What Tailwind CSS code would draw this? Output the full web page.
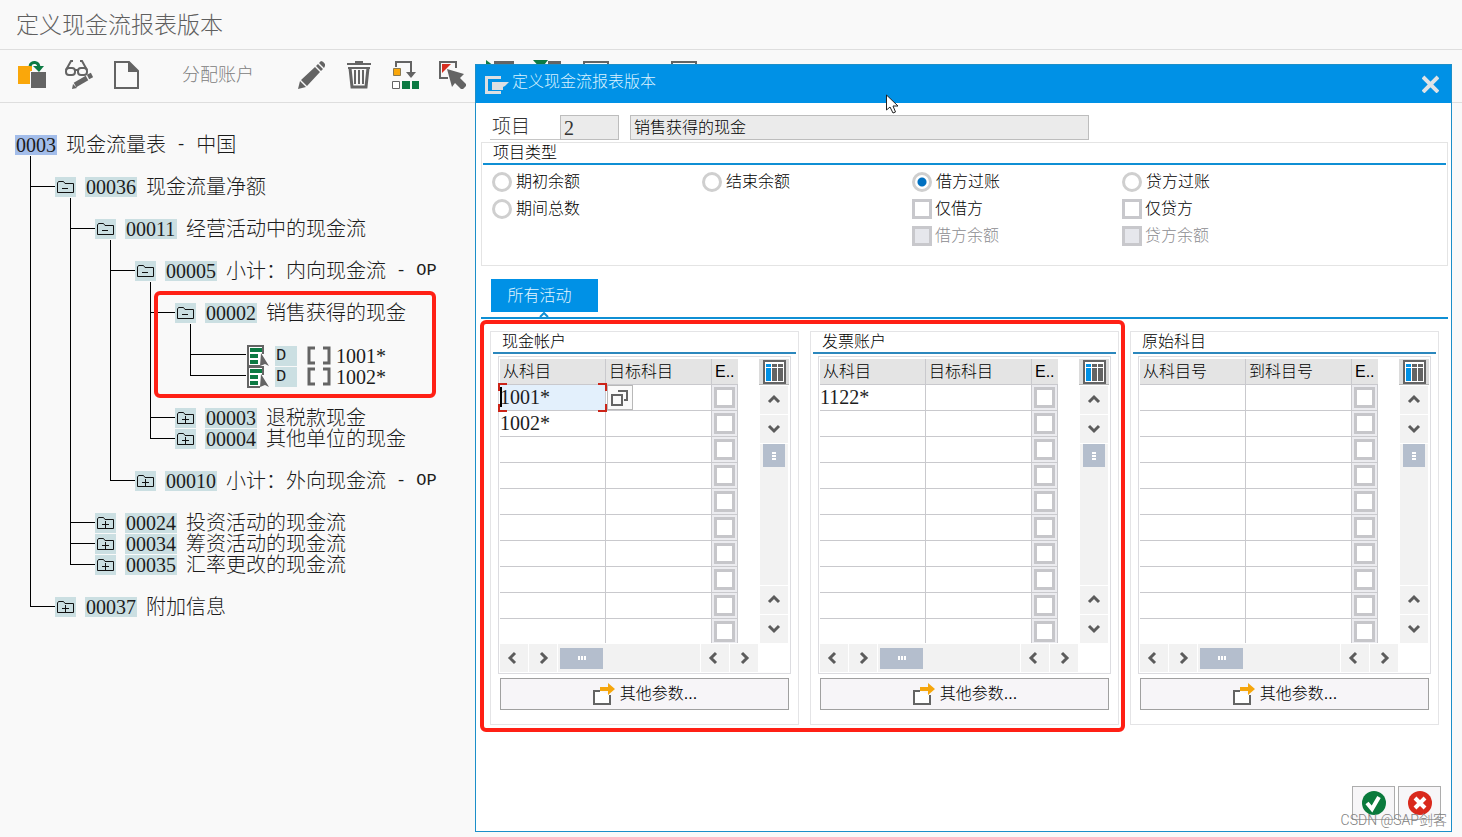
<!DOCTYPE html>
<html lang="zh-CN">
<head>
    <meta charset="utf-8"/>
    <meta content="width=device-width, initial-scale=1.0" name="viewport"/>
    <title>定义现金流报表版本</title>
    <script src="https://cdn.jsdelivr.net/npm/@tailwindcss/browser@4"></script>
</head>
<body class="relative min-h-screen overflow-x-hidden bg-[#f9f9f9] font-['Liberation_Sans','Noto_Sans_CJK_SC',sans-serif] font-light text-black">
    <header class="flex h-[50px] items-center border-b border-[#dedede] pl-4">
        <h1 class="text-[23px] leading-6 text-[#5f5f5f]">定义现金流报表版本</h1>
    </header>
    <nav class="flex h-[53px] items-center gap-[18px] overflow-hidden border-b border-[#dedede] pb-[3px] pl-[17px] text-[#646464]">
        <button aria-label="复制" class="shrink-0">
            <svg width="29" height="29" viewBox="0 0 29 29"><path fill="#faa70a" d="M1 6h14v18H1z"/><path fill="#646464" stroke="#f9f9f9" stroke-width="1" d="M13.500 11.500h16v17h-16z"/><path fill="none" stroke="#0c7a43" stroke-width="3" d="M13 6c1-5 9-5 9 2"/><path fill="#0c7a43" d="M16 6h11l-5 6z"/></svg>
        </button>
        <button aria-label="显示/更改" class="shrink-0">
            <svg width="29" height="29" viewBox="0 0 29 29" fill="none" stroke="#646464" stroke-width="2"><rect x="2" y="8" width="9" height="7" rx="3"/><rect x="14" y="8" width="9" height="7" rx="3"/><path d="M11 10h3M2 10L7 1h2M23 10L18 1h-2"/><path stroke-width="5" d="M11 25l12-7"/><path stroke-width="5" d="M24 17l4-2"/><path fill="#646464" stroke="none" d="M8 29l1-5 4 4z"/></svg>
        </button>
        <button aria-label="创建" class="shrink-0">
            <svg width="29" height="29" viewBox="0 0 29 29"><path fill="none" stroke="#646464" stroke-width="2" d="M4 2h14l9 9v17H4z"/><path fill="#646464" d="M17 1l11 11H17z"/></svg>
        </button>
        <button class="shrink-0 px-6 text-[18px] leading-6 text-[#808080]">分配账户</button>
        <button aria-label="更改" class="shrink-0">
            <svg width="29" height="29" viewBox="0 0 29 29" fill="#646464"><path d="M2 29l2-8 6 6zM5 20L19 7l5 5L11 26zM20 6l2-2 5 5-2 2zM23 3l2-2q2 0 4 3v2l-1 2z"/></svg>
        </button>
        <button aria-label="删除" class="shrink-0">
            <svg width="29" height="29" viewBox="0 0 29 29"><path fill="#646464" d="M4 3h8V1h8v2h8v2H4zM5 7h22v2H5z"/><path fill="none" stroke="#646464" stroke-width="3" d="M7 8l2 19h14l2-19"/><path stroke="#646464" stroke-width="2" d="M12 10v14M16 10v14M20 10v14"/></svg>
        </button>
        <button aria-label="层次" class="shrink-0">
            <svg width="29" height="29" viewBox="0 0 29 29"><path fill="none" stroke="#646464" stroke-width="2" d="M6 7V2h15v12"/><path fill="#646464" d="M16 12h10l-5 6z"/><path fill="#faa70a" stroke="#8a7a50" d="M3.500 8.500h7v7h-7z"/><path fill="#fff" stroke="#646464" d="M2.500 21.500h7v7h-7z"/><path fill="#0c7a43" d="M12 21h8v8h-8zM22 21h8v8h-8z"/></svg>
        </button>
        <button aria-label="选择" class="shrink-0">
            <svg width="29" height="29" viewBox="0 0 29 29"><path fill="none" stroke="#646464" stroke-width="2" d="M19 8V2H3v16h8"/><path fill="#d82e20" d="M5 4h9l-9 9z"/><path fill="#646464" d="M10 9l17 5-4 4 7 7-5 5-7-7-3 4z"/></svg>
        </button>
        <button aria-label="插入" class="shrink-0">
            <svg width="31" height="29" viewBox="0 0 31 29"><path fill="#0c7a43" d="M2 0l8 6-8 6z"/><path fill="#646464" d="M10 1h20v4H10z"/></svg>
        </button>
        <button aria-label="移动" class="shrink-0">
            <svg width="29" height="29" viewBox="0 0 29 29"><path fill="#0c7a43" d="M0 0h15l-7 9z"/><path fill="#646464" d="M15 1h13v4H15z"/></svg>
        </button>
        <button aria-label="展开" class="shrink-0">
            <svg width="29" height="29" viewBox="0 0 29 29"><path fill="none" stroke="#646464" stroke-width="2" d="M4 2h24v24H4z"/></svg>
        </button>
        <button aria-label="折叠" class="ml-[41px] shrink-0">
            <svg width="29" height="29" viewBox="0 0 29 29"><path fill="none" stroke="#646464" stroke-width="2" d="M4 2h24v24H4z"/></svg>
        </button>
    </nav>

    <main class="px-[15px] pt-8 pb-[200px] font-['Liberation_Serif','Noto_Sans_CJK_SC',serif] text-[20px] leading-5 text-[#1c1c1c]">
        <div class="flex h-[21px] gap-[9px]">
            <span class="h-5 w-[42px] bg-[#a3bdea] px-px">0003</span>
            <span class="flex gap-[10px]"><span>现金流量表</span><span class="font-['Liberation_Mono'] text-[17px]">-</span><span>中国</span></span>
        </div>
        <ul id="tree" class="ml-[15px]"></ul>
    </main>

    <!-- marker round the selected item -->
    <div class="pointer-events-none absolute top-[291px] left-[154px] h-[107px] w-[282px] rounded-md border-4 border-[#ff2015]"></div>

    <section role="dialog" aria-labelledby="dialog-title" class="absolute top-16 right-[10px] left-[475px] border border-[#1c8fc9] bg-white">
        <div class="flex h-[38px] items-center justify-between bg-[#0091e6] pr-3 pb-px pl-2">
            <div class="flex items-start gap-[3px]">
                <svg class="mt-1" width="25" height="20" viewBox="0 0 25 20"><path fill="none" stroke="#dcdfe2" stroke-width="3" d="M17 1.500H2.500v15H17"/><path fill="#dcdfe2" d="M8 6h17l-4 4-2 1v3H8z"/></svg>
                <h2 id="dialog-title" class="pb-1 text-[16px] leading-5 text-[#d8f2ff]">定义现金流报表版本</h2>
            </div>
            <button aria-label="关闭">
                <svg width="17" height="18" viewBox="0 0 17 18"><path stroke="#dfe3e6" stroke-width="4" d="M1 2l15 15M16 2L1 17"/></svg>
            </button>
        </div>

        <div class="pt-3 pr-[3px] pb-[11px] pl-[5px]">
            <div class="flex h-[25px] pl-[9px]">
                <label for="item-no" class="w-[70px] border-b border-[#c6c6c6] pl-[2px] text-[19px] leading-6 text-[#333]">项目</label>
                <input id="item-no" value="2" readonly class="w-[59px] border border-[#bdbdbd] bg-[#ebebeb] px-[3px] font-['Liberation_Serif',serif] text-[20px] text-[#333]"/>
                <input aria-label="项目名称" value="销售获得的现金" readonly class="ml-[11px] w-[459px] border border-[#bdbdbd] bg-[#ebebeb] px-[3px] text-[16px]"/>
            </div>

            <fieldset class="mt-[2px] border border-[#e4e4e4] px-px pb-4 text-[16px] leading-5">
                <div class="border-b-2 border-[#0f8fd4] pl-[10px] leading-5">项目类型</div>
                <div class="grid grid-cols-[repeat(4,210px)] auto-rows-[27px] items-center pt-[3px] pl-[9px]">
                    <label class="flex items-center gap-1"><input type="radio" name="kind" class="size-5 appearance-none rounded-full border-3 border-[#cfcfcf] bg-white checked:bg-[radial-gradient(circle,#0070c0_4px,#ffffff_5px)]"/>期初余额</label>
                    <label class="flex items-center gap-1"><input type="radio" name="kind" class="size-5 appearance-none rounded-full border-3 border-[#cfcfcf] bg-white checked:bg-[radial-gradient(circle,#0070c0_4px,#ffffff_5px)]"/>结束余额</label>
                    <label class="flex items-center gap-1"><input type="radio" name="kind" checked class="size-5 appearance-none rounded-full border-3 border-[#cfcfcf] bg-white checked:bg-[radial-gradient(circle,#0070c0_4px,#ffffff_5px)]"/>借方过账</label>
                    <label class="flex items-center gap-1"><input type="radio" name="kind" class="size-5 appearance-none rounded-full border-3 border-[#cfcfcf] bg-white checked:bg-[radial-gradient(circle,#0070c0_4px,#ffffff_5px)]"/>贷方过账</label>
                    <label class="flex items-center gap-1"><input type="radio" name="kind" class="size-5 appearance-none rounded-full border-3 border-[#cfcfcf] bg-white checked:bg-[radial-gradient(circle,#0070c0_4px,#ffffff_5px)]"/>期间总数</label>
                    <label class="col-start-3 flex items-center gap-[3px]"><input type="checkbox" class="size-5 appearance-none border-3 border-[#c8c8cc] bg-white"/>仅借方</label>
                    <label class="flex items-center gap-[3px]"><input type="checkbox" class="size-5 appearance-none border-3 border-[#c8c8cc] bg-white"/>仅贷方</label>
                    <label class="col-start-3 flex items-center gap-[3px] text-[#8c8c90]"><input type="checkbox" disabled class="size-5 appearance-none border-3 border-[#c8c8cc] bg-[#e6e7ec]"/>借方余额</label>
                    <label class="flex items-center gap-[3px] text-[#8c8c90]"><input type="checkbox" disabled class="size-5 appearance-none border-3 border-[#c8c8cc] bg-[#e6e7ec]"/>贷方余额</label>
                </div>
            </fieldset>

            <div class="mt-[13px] flex flex-col items-start border-b-2 border-[#0f8fd4] pl-[10px]">
                <button class="h-[33px] w-[107px] bg-[#0091e6] pr-[10px] text-[16px] leading-5 text-[#e2f6ff]">所有活动</button>
                <svg class="ml-12" width="10" height="5" viewBox="0 0 10 5"><path fill="none" stroke="#0f8fd4" stroke-width="2" d="M1 5l4-4 4 4"/></svg>
            </div>

            <div id="panels" class="mt-3 flex gap-[11px] pl-[9px]"></div>

            <div class="mt-[61px] flex justify-end gap-[3px] pr-[7px]">
                <button aria-label="确定" class="flex h-[34px] w-[43px] items-center justify-center border border-[#adadad] bg-[#f7f6f8]">
                    <svg width="24" height="24" viewBox="0 0 24 24"><circle cx="12" cy="12" r="12" fill="#0a7a3c"/><path fill="none" stroke="#fff" stroke-width="4" d="M5 12l5 6 7-12"/></svg>
                </button>
                <button aria-label="取消" class="flex h-[34px] w-[43px] items-center justify-center border border-[#adadad] bg-[#f7f6f8]">
                    <svg width="24" height="24" viewBox="0 0 24 24"><circle cx="12" cy="12" r="12" fill="#d9291c"/><path stroke="#fff" stroke-width="4" d="M7 7l10 10M17 7L7 17"/></svg>
                </button>
            </div>
        </div>
    </section>

    <div class="pointer-events-none absolute top-[320px] left-[480px] h-[412px] w-[645px] rounded-md border-4 border-[#ff2015]"></div>
    <svg class="pointer-events-none absolute top-[94px] left-[886px]" width="13" height="20" viewBox="0 0 13 20"><path fill="#fff" stroke="#222" d="M.5 1v15l3.500-3 3 6 2.500-1-2.500-6h5z"/></svg>
    <div class="pointer-events-none absolute top-[810px] right-[15px] font-['Roboto','Noto_Sans_CJK_SC',sans-serif] text-[14px] leading-5 text-[#808080]">CSDN @SAP剑客</div>

    <script>
        // gap: an empty line above the node
        const nodes = [
            { no: '00036', text: ['现金流量净额'], gap: true, children: [
                { no: '00011', text: ['经营活动中的现金流'], gap: true, children: [
                    { no: '00005', text: ['小计：内向现金流', '-', 'OP'], gap: true, children: [
                        { no: '00002', text: ['销售获得的现金'], gap: true, children: [
                            { account: '1001*', gap: true },
                            { account: '1002*' }
                        ] },
                        { no: '00003', text: ['退税款现金'], gap: true },
                        { no: '00004', text: ['其他单位的现金'] }
                    ] },
                    { no: '00010', text: ['小计：外向现金流', '-', 'OP'], gap: true }
                ] },
                { no: '00024', text: ['投资活动的现金流'], gap: true },
                { no: '00034', text: ['筹资活动的现金流'] },
                { no: '00035', text: ['汇率更改的现金流'] }
            ] },
            { no: '00037', text: ['附加信息'], gap: true }
        ];

        const textPart = part => /^[\x00-\x7f]+$/.test(part)
            ? `<span class="font-['Liberation_Mono'] text-[17px]">${part}</span>`
            : `<span>${part}</span>`;

        function nodeRow(node) {
            if (node.account) {
                return `<div class="flex h-[21px] items-center">
                    <svg class="shrink-0" width="24" height="22" viewBox="0 0 24 22"><path fill="#fff" stroke="#646464" stroke-width="2" d="M17 9V1H2v20h12"/><path fill="#0c7a43" d="M4 3h12v4H4zM4 9h8v4H4zM4 15h8v4H4z"/><path fill="#646464" d="M15 8l8 13-4-2-5 2z"/></svg>
                    <span class="ml-[5px] h-5 w-[22px] bg-[#cbdfe2] px-px font-['Liberation_Mono'] text-[17px]">D</span>
                    <svg class="ml-[10px] shrink-0" width="24" height="20" viewBox="0 0 24 20"><path fill="none" stroke="#646464" stroke-width="3" d="M8 2H2v15h6M16 2h6v15h-6"/></svg>
                    <span class="ml-[5px]">${node.account}</span>
                </div>`;
            }
            return `<div class="flex h-[21px] gap-[9px] whitespace-nowrap">
                <button aria-label="${node.no}" class="flex h-5 w-[21px] items-center justify-center bg-[#cbdfe2] pb-px">
                    <svg width="17" height="12" viewBox="0 0 17 12"><path fill="none" stroke="#111" d="M.5 11.500V2l1-1.500h5l1.500 2h8.500v9z"/><path stroke="#111" d="${node.children ? 'M5 7.500h6' : 'M5 7.500h7M8.500 4v7'}"/></svg>
                </button>
                <span class="h-5 w-[52px] bg-[#cbdfe2] px-px">${node.no}</span>
                <span class="flex gap-[10px]">${node.text.map(textPart).join('')}</span>
            </div>`;
        }

        function branch(list) {
            return list.map((node, i) => `<li class="flex">
                <div class="flex flex-col ${node.account ? 'w-[56px]' : 'w-[25px]'}">
                    <div class="border-b border-l border-black ${node.gap ? 'h-[31px]' : 'h-[10px]'}"></div>
                    ${i < list.length - 1 ? '<div class="grow border-l border-black"></div>' : ''}
                </div>
                <div class="${node.gap ? 'pt-[21px]' : ''}">
                    ${nodeRow(node)}
                    ${node.children ? `<ul class="ml-[15px]">${branch(node.children)}</ul>` : ''}
                </div>
            </li>`).join('');
        }
        document.getElementById('tree').innerHTML = branch(nodes);

        const panels = [
            { title: '现金帐户', cols: ['从科目', '目标科目'], rows: ['1001*', '1002*'], active: true },
            { title: '发票账户', cols: ['从科目', '目标科目'], rows: ['1122*'] },
            { title: '原始科目', cols: ['从科目号', '到科目号'], rows: [] }
        ];

        const arrows = {
            up: ['向上', 'M2 9l5-5 5 5'],
            down: ['向下', 'M2 4l5 5 5-5'],
            left: ['向左', 'M8 2L3 7l5 5'],
            right: ['向右', 'M5 2l5 5-5 5']
        };
        const arrow = dir => `<button aria-label="${arrows[dir][0]}" class="flex h-7 w-7 shrink-0 items-center justify-center bg-[#f2f2f2]">
            <svg width="14" height="14" viewBox="0 0 14 14"><path fill="none" stroke="#5c5c5c" stroke-width="3" d="${arrows[dir][1]}"/></svg>
        </button>`;

        // input help button and red focus corners of the active cell
        const focusMarks = `
            <svg class="pointer-events-none absolute -top-[2px] -left-[2px] z-10" width="109" height="29" viewBox="0 0 109 29"><path fill="none" stroke="#cc2418" stroke-width="2" d="M1 8V1h8M100 1h8v7M1 21v7h8M100 28h8v-7"/><path stroke="#000" stroke-width="2" d="M3 4v20"/></svg>
            <button aria-label="搜索帮助" class="absolute top-0 left-[107px] flex h-[25px] w-[26px] items-center justify-center border border-[#b8b8b8] bg-[#fafafa]">
                <svg width="18" height="18" viewBox="0 0 18 18"><path fill="none" stroke="#646464" stroke-width="2" d="M1 6h10v10H1zM7 2h9v9h-3"/></svg>
            </button>`;

        function tableRow(panel, i) {
            const active = panel.active && i === 0;
            return `<tr class="h-[26px]">
                <td class="border-r border-b border-[#c9c9cd] p-0 ${active ? 'relative bg-[#e3f0fc]' : 'bg-white'}">
                    <input aria-label="${panel.cols[0]} ${i + 1}" value="${panel.rows[i] || ''}" class="block h-[25px] w-full font-['Liberation_Serif',serif] text-[20px] leading-6 text-[#1c1c1c]"/>${active ? focusMarks : ''}
                </td>
                <td class="border-r border-b border-[#c9c9cd] p-0"><input aria-label="${panel.cols[1]} ${i + 1}" class="block h-[25px] w-full font-['Liberation_Serif',serif] text-[20px]"/></td>
                <td class="border-r border-b border-[#c9c9cd] bg-[#ececf0] p-0"><input type="checkbox" aria-label="E ${i + 1}" class="mx-auto block size-[21px] appearance-none border-3 border-[#c6c6ca] bg-white"/></td>
            </tr>`;
        }

        document.getElementById('panels').innerHTML = panels.map(panel => `
            <section class="w-[309px] shrink-0 border border-[#e4e4e6] px-[2px] pb-[14px] text-[16px] leading-5">
                <h3 class="border-b-2 border-[#2b87bd] pl-[9px]">${panel.title}</h3>
                <div class="mx-auto mt-[2px] w-[293px] border border-[#dcdce0] px-px pt-[2px] pb-px">
                    <div class="flex h-[284px] justify-between overflow-x-visible overflow-y-clip">
                        <table class="h-[286px] w-[238px] shrink-0 table-fixed border-separate border-spacing-0 self-start">
                            <thead>
                                <tr class="h-[26px] bg-[#e4e4e4] text-left">
                                    <th class="w-[106px] border-r border-b border-[#c9c9cd] p-0 pl-[3px] font-light">${panel.cols[0]}</th>
                                    <th class="w-[106px] border-r border-b border-[#c9c9cd] p-0 pl-[3px] font-light">${panel.cols[1]}</th>
                                    <th class="w-[26px] border-b border-[#c9c9cd] p-0 pl-[3px] font-light">E..</th>
                                </tr>
                            </thead>
                            <tbody>${Array.from({ length: 10 }, (_, i) => tableRow(panel, i)).join('')}</tbody>
                        </table>
                        <div class="flex w-[30px] flex-col items-center gap-px">
                            <button aria-label="配置" class="flex h-[26px] w-full shrink-0 items-center justify-center border-b border-[#b5b5b5] bg-[#dcdcdc]">
                                <svg width="23" height="24" viewBox="0 0 23 24"><path fill="#fff" stroke="#646464" stroke-width="2" d="M1 1h21v22H1z"/><path fill="#0091e6" d="M3 4h5v3H3zM3 8h5v13H3z"/><path fill="#646464" d="M9 4h5v3H9zM15 4h5v3h-5zM9 8h5v13H9zM15 8h5v13h-5z"/></svg>
                            </button>
                            ${arrow('up')}${arrow('down')}
                            <div class="flex w-7 grow justify-center bg-[#f2f2f2]">
                                <div class="flex h-[23px] w-[22px] flex-col items-center justify-center gap-px bg-[#b4becd]"><i class="h-[2px] w-1 bg-white"></i><i class="h-[2px] w-1 bg-white"></i><i class="h-[2px] w-1 bg-white"></i></div>
                            </div>
                            ${arrow('up')}${arrow('down')}
                        </div>
                    </div>
                    <div class="mt-px flex w-[258px] gap-px">
                        ${arrow('left')}${arrow('right')}
                        <div class="flex grow items-center bg-[#f2f2f2] pl-[2px]">
                            <div class="flex h-[21px] w-[43px] items-center justify-center gap-px bg-[#b4becd]"><i class="h-1 w-[2px] bg-white"></i><i class="h-1 w-[2px] bg-white"></i><i class="h-1 w-[2px] bg-white"></i></div>
                        </div>
                        ${arrow('left')}${arrow('right')}
                    </div>
                </div>
                <button class="mx-auto mt-1 flex h-8 w-[289px] items-center justify-center gap-1 border border-[#a0a0a0] bg-[#f7f5f8]">
                    <svg width="24" height="22" viewBox="0 0 24 22"><path fill="#fff" stroke="#646464" stroke-width="2" d="M8 8H2v13h16v-9"/><path fill="#f5a60d" d="M8 4h8V0l7 6-7 6V8H8z"/></svg>
                    其他参数...
                </button>
            </section>`).join('');
    </script>
</body>
</html>
